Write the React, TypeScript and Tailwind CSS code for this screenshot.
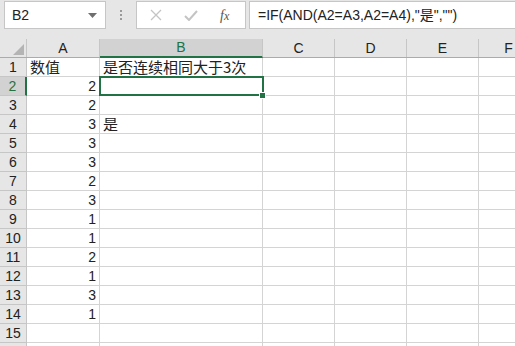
import React from "react";

const font = { fontFamily: '"Liberation Sans", "Noto Sans CJK SC", sans-serif' };
const cjk = { fontFamily: '"Noto Sans CJK SC", "Liberation Sans", sans-serif', fontSize: 15 };

const cols = [
  { k: "A", w: 73 },
  { k: "B", w: 163 },
  { k: "C", w: 72 },
  { k: "D", w: 72 },
  { k: "E", w: 72 },
  { k: "F", w: 60 },
];

const dataA: (string | number)[] = ["数值", 2, 2, 3, 3, 3, 2, 3, 1, 1, 2, 1, 3, 1, ""];
const dataB: string[] = ["是否连续相同大于3次", "", "", "是", "", "", "", "", "", "", "", "", "", "", ""];

export default function App() {
  return (
    <div className="w-[515px] h-[346px] overflow-hidden bg-white text-[#222]" style={font}>
      {/* toolbar */}
      <div className="h-[39px] bg-[#e6e6e6] flex items-start pt-[1px]">
        <div className="ml-[4px] w-[102px] h-[28px] shrink-0 bg-white border border-[#c6c6c6] flex items-center pl-[7px] pr-[8px] justify-between">
          <span className="text-[14px] text-[#222]">B2</span>
          <svg width="9" height="5" viewBox="0 0 9 5"><path d="M0 0 L9 0 L4.5 5 Z" fill="#6f6f6f" /></svg>
        </div>
        <div className="w-[30px] h-[28px] shrink-0 flex flex-col items-center justify-center gap-[2px]">
          <div className="w-[2px] h-[2px] bg-[#9a9a9a]" />
          <div className="w-[2px] h-[2px] bg-[#9a9a9a]" />
          <div className="w-[2px] h-[2px] bg-[#9a9a9a]" />
        </div>
        <div className="w-[110px] h-[28px] shrink-0 bg-white border border-[#c6c6c6] flex items-center">
          <svg className="ml-[13px]" width="12" height="12" viewBox="0 0 12 12"><path d="M1 1 L11 11 M11 1 L1 11" stroke="#c4c4c4" strokeWidth="1.3" /></svg>
          <svg className="ml-[22px]" width="14" height="11" viewBox="0 0 14 11"><path d="M1 6 L5 10 L13 1" stroke="#c4c4c4" strokeWidth="2" fill="none" /></svg>
          <span className="ml-[22px] text-[14px] italic text-[#555]" style={{ fontFamily: '"Liberation Serif", serif' }}>f<span className="text-[12px]">x</span></span>
        </div>
        <div className="ml-[3px] flex-1 h-[28px] bg-white border border-[#c6c6c6] border-r-0 flex items-center pl-[8px]">
          <span className="text-[14px] text-[#222] whitespace-nowrap" style={font}>=IF(AND(A2=A3,A2=A4),"是","")</span>
        </div>
      </div>
      {/* column header */}
      <div className="flex h-[19px] bg-[#e6e6e6] border-b border-[#ababab]">
        <div className="w-[27px] shrink-0 h-full border-r border-[#c6c6c6] relative">
          <svg className="absolute left-[13px] top-[5px]" width="11" height="11" viewBox="0 0 11 11"><path d="M11 0 L11 11 L0 11 Z" fill="#b4b4b4" /></svg>
        </div>
        {cols.map((c) => (
          <div
            key={c.k}
            style={{ width: c.w }}
            className={
              c.k === "B"
                ? "h-[19px] shrink-0 bg-[#d2d2d2] border-r border-[#c6c6c6] border-b-2 border-b-[#217346] flex items-center justify-center text-[14px] text-[#217346]"
                : "h-full shrink-0 border-r border-[#c6c6c6] flex items-center justify-center text-[14px] text-[#222]"
            }
          >
            {c.k}
          </div>
        ))}
      </div>
      {/* rows */}
      {Array.from({ length: 16 }).map((_, i) => {
        const r = i + 1;
        const sel = r === 2;
        const a = dataA[i] ?? "";
        const b = dataB[i] ?? "";
        return (
          <div key={r} className={"flex h-[19px] " + (sel ? "relative z-10" : "")}>
            <div
              className={
                sel
                  ? "w-[27px] h-full shrink-0 bg-[#d2d2d2] border-b border-[#c6c6c6] border-r-2 border-r-[#217346] flex items-center justify-center text-[14px] text-[#217346]"
                  : "w-[27px] h-full shrink-0 bg-[#e6e6e6] border-b border-r border-[#c6c6c6] flex items-center justify-center text-[14px] text-[#222]"
              }
            >
              {r <= 15 ? r : ""}
            </div>
            <div
              style={{ width: 73 }}
              className={
                "h-full shrink-0 border-r border-b border-[#d4d4d4] flex items-center text-[14px] px-[3px] whitespace-nowrap " +
                (typeof a === "number" ? "justify-end" : "justify-start")
              }
            >
              <span style={typeof a === "number" ? font : cjk}>{a}</span>
            </div>
            <div
              style={{ width: 163 }}
              className="h-full shrink-0 border-r border-b border-[#d4d4d4] flex items-center text-[14px] px-[3px] whitespace-nowrap relative"
            >
              <span style={cjk}>{b}</span>
              {sel && (
                <>
                  <div className="absolute left-[-1px] top-[-1px] w-[165px] h-[20px] border-2 border-[#217346]" />
                  <div className="absolute right-[-4px] bottom-[-4px] w-[7px] h-[7px] bg-[#217346] border border-white" />
                </>
              )}
            </div>
            {[72, 72, 72, 60].map((w, j) => (
              <div key={j} style={{ width: w }} className="h-full shrink-0 border-r border-b border-[#d4d4d4]" />
            ))}
          </div>
        );
      })}
    </div>
  );
}
